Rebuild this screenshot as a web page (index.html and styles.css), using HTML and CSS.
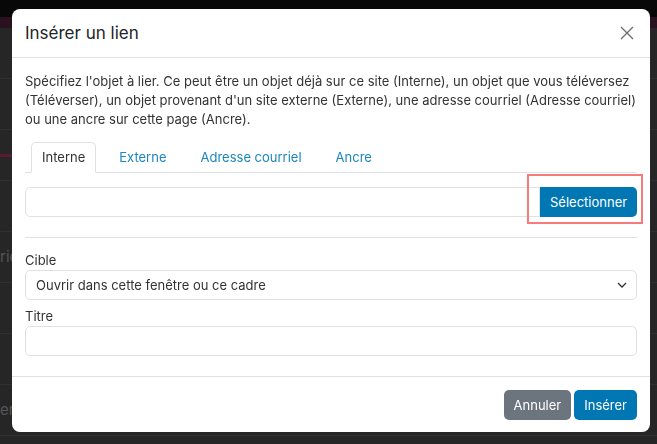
FILE: index.html
```html
<!DOCTYPE html>
<html lang="fr">
<head>
    <meta charset="UTF-8">
    <meta name="viewport" content="width=device-width, initial-scale=1.0">
    <title>Insérer un lien</title>
    <link rel="stylesheet" href="styles.css">
</head>
<body>

    <div class="page">
        <div class="topbar"></div>
        <div class="accent-bar"></div>
        <div class="page-row"></div>
        <div class="page-row"></div>
        <div class="page-row"><span class="page-mark"></span></div>
        <div class="page-row"></div>
        <div class="page-row">rié</div>
        <div class="page-row"></div>
        <div class="page-row"></div>
        <div class="page-row">er</div>
    </div>

    <div class="modal">
        <div class="modal-header">
            <h5 class="modal-title">Insérer un lien</h5>
            <button type="button" class="btn-close" aria-label="Fermer">
                <svg width="14" height="14" viewBox="0 0 14 14">
                    <path d="M1 1 L13 13 M13 1 L1 13" stroke="#6f6f6f" stroke-width="1.4" fill="none"/>
                </svg>
            </button>
        </div>

        <div class="modal-body">
            <p class="intro">Spécifiez l'objet à lier. Ce peut être un objet déjà sur ce site (Interne), un objet que vous téléversez (Téléverser), un objet provenant d'un site externe (Externe), une adresse courriel (Adresse courriel) ou une ancre sur cette page (Ancre).</p>

            <ul class="nav-tabs">
                <li><a href="#" class="tab active">Interne</a></li>
                <li><a href="#" class="tab">Externe</a></li>
                <li><a href="#" class="tab">Adresse courriel</a></li>
                <li><a href="#" class="tab">Ancre</a></li>
            </ul>

            <div class="input-group">
                <input type="text" class="form-control">
                <button type="button" class="btn btn-primary btn-attached">Sélectionner</button>
                <span class="highlight"></span>
            </div>

            <hr>

            <label for="cible">Cible</label>
            <div class="select-wrap">
                <select id="cible" class="form-control">
                    <option>Ouvrir dans cette fenêtre ou ce cadre</option>
                </select>
                <svg class="chevron" width="10" height="6" viewBox="0 0 10 6">
                    <path d="M1 1 L5 5 L9 1" stroke="#333" stroke-width="1.3" fill="none"/>
                </svg>
            </div>

            <label for="titre">Titre</label>
            <input type="text" id="titre" class="form-control">
        </div>

        <div class="modal-footer">
            <button type="button" class="btn btn-secondary">Annuler</button>
            <button type="button" class="btn btn-primary">Insérer</button>
        </div>
    </div>

</body>
</html>
```

FILE: styles.css
```css
* {
    box-sizing: border-box;
}
body {
    margin: 0;
    background-color: #262626;
    font-family: Inter, "Noto Sans", sans-serif;
    font-size: 13px;
    color: #333;
}
.page {
    height: 444px;
    overflow: hidden;
}
.topbar {
    height: 17px;
    background-color: #080808;
}
.accent-bar {
    height: 11px;
    background-color: #2a111f;
}
.page-row {
    height: 51px;
    border-bottom: 1px solid #303030;
    color: #555;
    font-size: 15px;
    line-height: 50px;
}
.page-mark {
    display: inline-block;
    width: 20px;
    height: 3px;
    background-color: #5a1a33;
    vertical-align: middle;
}
.modal {
    position: fixed;
    top: 9px;
    left: 12px;
    width: 638px;
    height: 423px;
    background-color: #fff;
    border-radius: 8px;
    display: flex;
    flex-direction: column;
}
.modal-header {
    display: flex;
    align-items: center;
    justify-content: space-between;
    padding: 12px 13px;
    border-bottom: 1px solid #dee2e6;
}
.modal-title {
    margin: 0;
    font-size: 17px;
    font-weight: 400;
    line-height: 24px;
    color: #212529;
}
.btn-close {
    background: none;
    border: none;
    padding: 0;
    margin-right: 3px;
    height: 14px;
    cursor: pointer;
}
.modal-body {
    padding: 14px 13px 20px;
    flex: 1;
}
.intro {
    margin: 0 0 13px;
    line-height: 19px;
}
.nav-tabs {
    list-style: none;
    margin: 0 0 14px;
    padding: 0 0 0 6px;
    display: flex;
    gap: 12px;
    border-bottom: 1px solid #dee2e6;
}
.tab {
    display: block;
    padding: 5px 10px;
    line-height: 19px;
    border: 1px solid transparent;
    border-radius: 5px 5px 0 0;
    margin-bottom: -1px;
    color: #1c86c0;
    text-decoration: none;
}
.tab.active {
    color: #333;
    background-color: #fff;
    border-color: #dee2e6 #dee2e6 #fff;
}
.form-control {
    display: block;
    width: 100%;
    height: 30px;
    padding: 0 10px;
    border: 1px solid #dee2e6;
    border-radius: 5px;
    font-family: inherit;
    font-size: 13px;
    color: #333;
    background-color: #fff;
}
.input-group {
    position: relative;
    display: flex;
}
.input-group .form-control {
    border-radius: 5px 0 0 5px;
}
.btn {
    height: 30px;
    padding: 0 10px;
    border: none;
    border-radius: 5px;
    font-family: inherit;
    font-size: 13px;
    color: #fff;
    cursor: pointer;
}
.btn-primary {
    background-color: #0077b3;
}
.btn-secondary {
    background-color: #6c757d;
}
.btn-attached {
    flex: none;
    width: 97px;
    border-radius: 0 5px 5px 0;
}
.highlight {
    position: absolute;
    top: -13px;
    right: -6px;
    width: 116px;
    height: 50px;
    border: 2px solid #f77b7b;
    pointer-events: none;
}
hr {
    margin: 20px 0 13px;
    border: none;
    border-top: 1px solid #dee2e6;
}
label {
    display: block;
    line-height: 19px;
}
.select-wrap {
    position: relative;
    margin-bottom: 7px;
}
select.form-control {
    appearance: none;
}
.chevron {
    position: absolute;
    right: 10px;
    top: 12px;
}
.modal-footer {
    display: flex;
    justify-content: flex-end;
    gap: 3px;
    padding: 13px 13px 12px;
    border-top: 1px solid #dee2e6;
}
```
